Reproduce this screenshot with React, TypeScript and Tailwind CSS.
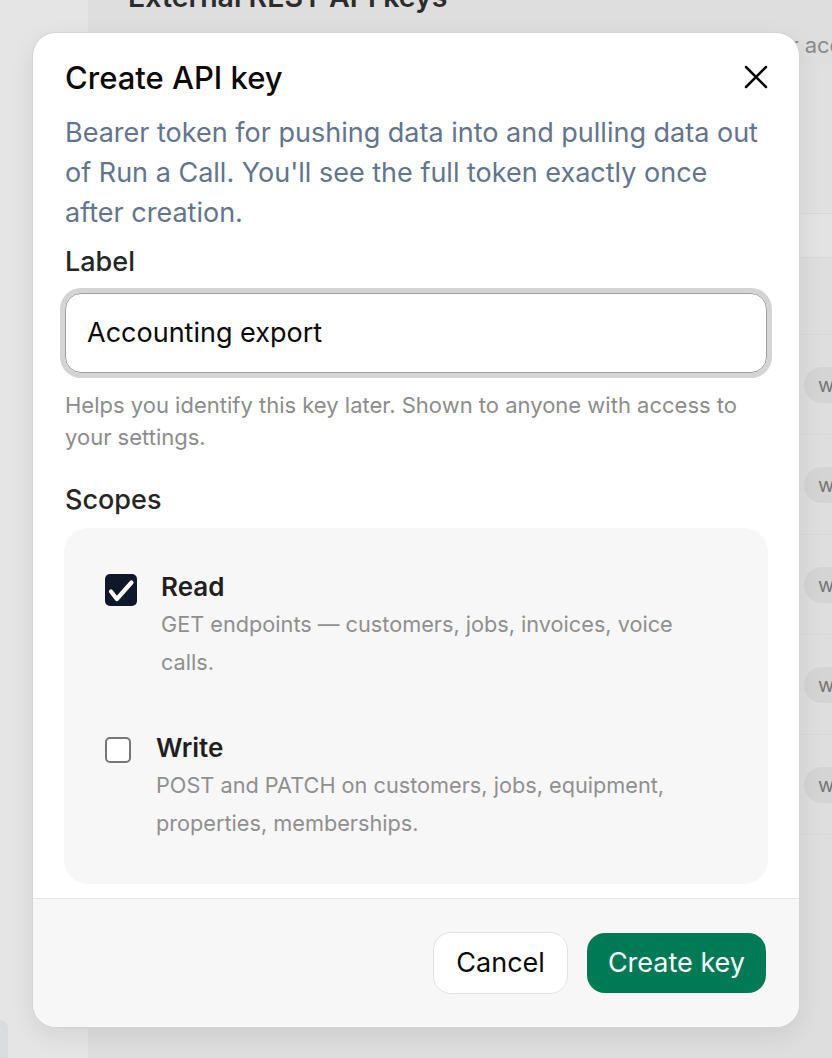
import React from "react";

function CloseIcon() {
  return (
    <svg width="40" height="40" viewBox="0 0 24 24" fill="none" stroke="#0a0a0a" strokeWidth="1.5" strokeLinecap="round" strokeLinejoin="round">
      <path d="M18 6 6 18" />
      <path d="m6 6 12 12" />
    </svg>
  );
}

function CheckedBox() {
  return (
    <div className="mt-[6px] flex h-[32px] w-[32px] shrink-0 items-center justify-center rounded-[5px] bg-[#0f172a]">
      <svg width="32" height="32" viewBox="0 0 32 32" fill="none">
        <path d="M6 17.5 L11.8 25 L26.5 8.5" stroke="#ffffff" strokeWidth="4.2" strokeLinecap="round" strokeLinejoin="round" />
      </svg>
    </div>
  );
}

function EmptyBox() {
  return <div className="mt-[8.5px] h-[26px] w-[26px] shrink-0 rounded-[5px] border-[2px] border-[#767676] bg-white" />;
}

const rows = ["Accounting export", "Zapier sync", "Warehouse ETL", "CRM bridge", "Reporting"];

export default function App() {
  return (
    <div className="relative h-[1058px] w-[832px] overflow-hidden bg-[#dedede] font-['Inter',sans-serif]">
      {/* Underlying page (dimmed) */}
      <div className="flex h-full">
        <aside className="flex w-[88px] shrink-0 flex-col justify-end bg-[#e5e5e5]">
          <div className="h-[38px] w-[8px] rounded-tr-[8px] bg-[#dadddf]" />
        </aside>
        <main className="flex-1 overflow-hidden">
          <div className="pl-[40px]">
            <h1 className="-mt-[23px] whitespace-nowrap text-[28.5px] font-semibold leading-[40px] text-[#2c2c2c]">External REST API keys</h1>
            <p className="ml-[13px] mt-[12px] whitespace-nowrap text-[22px] leading-[32px] text-[#8a8a8a]">
              Issue bearer tokens so external systems can sync data for your account. Keys are scoped per integration.
            </p>
          </div>
          <div className="mt-[4px] h-[148px] bg-[#e0e0e0]" />
          <div className="h-[45px] border-y border-[#d8d8d8] bg-[#e3e3e3]" />
          <div className="h-[77px] border-b border-[#d9d9d9]" />
          {rows.map((r) => (
            <div key={r} className="flex h-[100px] items-center border-b border-[#d9d9d9] pl-[40px]">
              <div className="w-[676px] shrink-0 text-[22px] text-[#555]">{r}</div>
              <div className="shrink-0 rounded-full bg-[#d4d4d4] px-[14px] text-[20px] leading-[36px] text-[#777]">write</div>
            </div>
          ))}
        </main>
      </div>

      {/* Modal */}
      <div className="absolute left-[32px] top-[32px] flex h-[996px] w-[768px] flex-col overflow-hidden rounded-[24px] border border-[#d3d3d3] bg-white shadow-[0_8px_24px_rgba(0,0,0,0.08)]">
        <div className="flex-1 px-[32px] pt-[25px]">
          <div className="flex items-start justify-between">
            <h2 className="text-[31px] font-medium leading-[40px] text-[#0a0a0a]">Create API key</h2>
            <button className="-mr-[9px] -mt-[1px] flex h-[40px] w-[40px] items-center justify-center">
              <CloseIcon />
            </button>
          </div>
          <p className="mt-[15px] text-[27px] leading-[40px] text-slate-500">
            Bearer token for pushing data into and pulling data out of Run a Call. You'll see the full token exactly once after creation.
          </p>
          <label className="mt-[9px] block text-[27px] font-medium leading-[40px] text-[#262626]">Label</label>
          <div className="mt-[11px] flex h-[80px] items-center rounded-[16px] border border-[#9e9e9e] px-[21px] text-[27px] text-[#0a0a0a] ring-[5px] ring-[#d4d4d4]">
            Accounting export
          </div>
          <p className="mt-[16px] text-[22px] leading-[32px] text-[#8c8c8c]">
            Helps you identify this key later. Shown to anyone with access to your settings.
          </p>
          <h3 className="mt-[27px] text-[27px] font-medium leading-[40px] text-[#262626]">Scopes</h3>
          <div className="-mx-[1px] mt-[8px] h-[356px] rounded-[24px] bg-[#f7f7f7] pl-[41px] pr-[40px] pt-[40px]">
            <div className="flex items-start gap-[24px]">
              <CheckedBox />
              <div>
                <div className="text-[26px] font-semibold leading-[37px] text-[#1f1f1f]">Read</div>
                <div className="max-w-[540px] text-[21.7px] leading-[38px] text-[#8f8f8f]">
                  GET endpoints — customers, jobs, invoices, voice calls.
                </div>
              </div>
            </div>
            <div className="mt-[47.5px] flex items-start gap-[25px]">
              <EmptyBox />
              <div>
                <div className="text-[26px] font-semibold leading-[37px] text-[#1f1f1f]">Write</div>
                <div className="max-w-[540px] text-[21.7px] leading-[38px] text-[#8f8f8f]">
                  POST and PATCH on customers, jobs, equipment, properties, memberships.
                </div>
              </div>
            </div>
          </div>
        </div>
        <div className="flex h-[129px] items-center justify-end gap-[19px] border-t border-[#e6e6e6] bg-[#f7f7f7] px-[33px]">
          <button className="h-[62px] rounded-[18px] border border-[#e2e2e2] bg-white px-[22px] text-[27px] text-[#0a0a0a]">Cancel</button>
          <button className="h-[60px] rounded-[18px] bg-emerald-700 px-[21px] text-[27px] text-white">Create key</button>
        </div>
      </div>
    </div>
  );
}
